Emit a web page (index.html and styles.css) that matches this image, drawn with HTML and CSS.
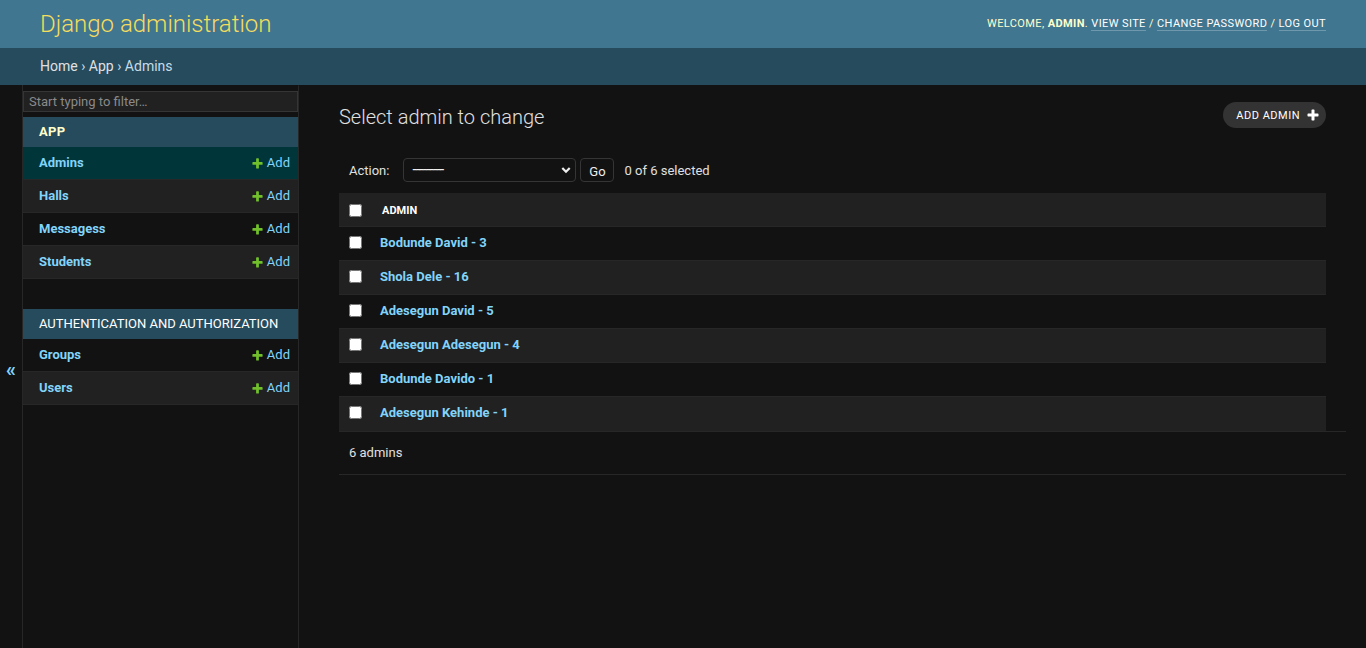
FILE: index.html
```html
<!DOCTYPE html>
<html lang="en">
<head>
<meta charset="utf-8">
<title>Select admin to change | Django site admin</title>
<link rel="stylesheet" href="styles.css">
</head>
<body>
<header class="header">
  <h1 class="site-name"><a href="#">Django administration</a></h1>
  <div class="user-tools">
    Welcome, <strong>admin</strong>. <a href="#">View site</a> / <a href="#">Change password</a> / <a href="#">Log out</a>
  </div>
</header>
<nav class="breadcrumbs"><a href="#">Home</a>&nbsp;›&nbsp;<a href="#">App</a>&nbsp;›&nbsp;Admins</nav>
<div class="main">
  <button class="toggle-nav" type="button">«</button>
  <nav class="nav-sidebar">
    <input class="nav-filter" type="search" placeholder="Start typing to filter…">
    <div class="module current-app">
      <div class="caption"><a class="section" href="#">App</a></div>
      <div class="model-row current-model"><a class="model-name" href="#">Admins</a><a class="addlink" href="#"><svg width="13" height="13" viewBox="0 0 1792 1792"><path fill="#70bf2b" d="M1600 796v192q0 40-28 68t-68 28h-416v416q0 40-28 68t-68 28h-192q-40 0-68-28t-28-68v-416h-416q-40 0-68-28t-28-68v-192q0-40 28-68t68-28h416v-416q0-40 28-68t68-28h192q40 0 68 28t28 68v416h416q40 0 68 28t28 68z"/></svg>Add</a></div>
      <div class="model-row"><a class="model-name" href="#">Halls</a><a class="addlink" href="#"><svg width="13" height="13" viewBox="0 0 1792 1792"><path fill="#70bf2b" d="M1600 796v192q0 40-28 68t-68 28h-416v416q0 40-28 68t-68 28h-192q-40 0-68-28t-28-68v-416h-416q-40 0-68-28t-28-68v-192q0-40 28-68t68-28h416v-416q0-40 28-68t68-28h192q40 0 68 28t28 68v416h416q40 0 68 28t28 68z"/></svg>Add</a></div>
      <div class="model-row"><a class="model-name" href="#">Messagess</a><a class="addlink" href="#"><svg width="13" height="13" viewBox="0 0 1792 1792"><path fill="#70bf2b" d="M1600 796v192q0 40-28 68t-68 28h-416v416q0 40-28 68t-68 28h-192q-40 0-68-28t-28-68v-416h-416q-40 0-68-28t-28-68v-192q0-40 28-68t68-28h416v-416q0-40 28-68t68-28h192q40 0 68 28t28 68v416h416q40 0 68 28t28 68z"/></svg>Add</a></div>
      <div class="model-row"><a class="model-name" href="#">Students</a><a class="addlink" href="#"><svg width="13" height="13" viewBox="0 0 1792 1792"><path fill="#70bf2b" d="M1600 796v192q0 40-28 68t-68 28h-416v416q0 40-28 68t-68 28h-192q-40 0-68-28t-28-68v-416h-416q-40 0-68-28t-28-68v-192q0-40 28-68t68-28h416v-416q0-40 28-68t68-28h192q40 0 68 28t28 68v416h416q40 0 68 28t28 68z"/></svg>Add</a></div>
    </div>
    <div class="module">
      <div class="caption"><a class="section" href="#">Authentication and Authorization</a></div>
      <div class="model-row"><a class="model-name" href="#">Groups</a><a class="addlink" href="#"><svg width="13" height="13" viewBox="0 0 1792 1792"><path fill="#70bf2b" d="M1600 796v192q0 40-28 68t-68 28h-416v416q0 40-28 68t-68 28h-192q-40 0-68-28t-28-68v-416h-416q-40 0-68-28t-28-68v-192q0-40 28-68t68-28h416v-416q0-40 28-68t68-28h192q40 0 68 28t28 68v416h416q40 0 68 28t28 68z"/></svg>Add</a></div>
      <div class="model-row"><a class="model-name" href="#">Users</a><a class="addlink" href="#"><svg width="13" height="13" viewBox="0 0 1792 1792"><path fill="#70bf2b" d="M1600 796v192q0 40-28 68t-68 28h-416v416q0 40-28 68t-68 28h-192q-40 0-68-28t-28-68v-416h-416q-40 0-68-28t-28-68v-192q0-40 28-68t68-28h416v-416q0-40 28-68t68-28h192q40 0 68 28t28 68v416h416q40 0 68 28t28 68z"/></svg>Add</a></div>
    </div>
  </nav>
  <main class="content">
    <div class="content-head">
      <h1 class="title">Select admin to change</h1>
      <a class="object-tool" href="#">Add admin<svg width="14" height="14" viewBox="0 0 1792 1792"><path fill="#fff" d="M1600 796v192q0 40-28 68t-68 28h-416v416q0 40-28 68t-68 28h-192q-40 0-68-28t-28-68v-416h-416q-40 0-68-28t-28-68v-192q0-40 28-68t68-28h416v-416q0-40 28-68t68-28h192q40 0 68 28t28 68v416h416q40 0 68 28t28 68z"/></svg></a>
    </div>
    <div class="actions">
      <span class="action-label">Action:</span>
      <div class="select"><span class="select-value">---------</span><svg width="12" height="12" viewBox="0 0 12 12"><path d="M2.3 4 6 7.7 9.7 4" fill="none" stroke="#eee" stroke-width="2.2"/></svg></div>
      <button class="go-button" type="button">Go</button>
      <span class="action-counter">0 of 6 selected</span>
    </div>
    <table class="result-list">
      <thead>
        <tr><th class="action-checkbox"><input type="checkbox"></th><th class="column-head">Admin</th></tr>
      </thead>
      <tbody>
        <tr><td class="action-checkbox"><input type="checkbox"></td><th class="field"><a href="#">Bodunde David - 3</a></th></tr>
        <tr><td class="action-checkbox"><input type="checkbox"></td><th class="field"><a href="#">Shola Dele - 16</a></th></tr>
        <tr><td class="action-checkbox"><input type="checkbox"></td><th class="field"><a href="#">Adesegun David - 5</a></th></tr>
        <tr><td class="action-checkbox"><input type="checkbox"></td><th class="field"><a href="#">Adesegun Adesegun - 4</a></th></tr>
        <tr><td class="action-checkbox"><input type="checkbox"></td><th class="field"><a href="#">Bodunde Davido - 1</a></th></tr>
        <tr><td class="action-checkbox"><input type="checkbox"></td><th class="field"><a href="#">Adesegun Kehinde - 1</a></th></tr>
      </tbody>
    </table>
    <p class="paginator">6 admins</p>
  </main>
</div>
</body>
</html>
```

FILE: styles.css
```css
* { box-sizing: border-box; }
html, body { height: 100%; }
body {
  margin: 0;
  background: #121212;
  color: #eeeeee;
  font-family: Roboto, "Noto Sans", "Liberation Sans", sans-serif;
  font-size: 14px;
  display: flex;
  flex-direction: column;
  overflow: hidden;
}
a { text-decoration: none; color: #81d4fa; }

.header {
  flex: 0 0 48px;
  display: flex;
  justify-content: space-between;
  align-items: center;
  padding: 0 40px;
  background: #417690;
  color: #ffffcc;
}
.site-name { margin: 0; font-size: 24px; font-weight: 300; line-height: 28px; }
.site-name a { color: #f5dd5d; }
.user-tools {
  font-size: 11px;
  letter-spacing: 0.4px;
  text-transform: uppercase;
  line-height: 14px;
  margin-bottom: 1px;
}
.user-tools strong { font-weight: 700; }
.user-tools a { color: #ffffff; border-bottom: 1px solid rgba(255, 255, 255, 0.25); }

.breadcrumbs {
  flex: 0 0 37px;
  display: flex;
  align-items: center;
  padding: 0 40px 2px;
  background: #264b5d;
  color: #c4dce8;
  font-size: 14px;
}
.breadcrumbs a { color: #e0e0e0; }

.main { flex: 1; display: flex; min-height: 0; }

.toggle-nav {
  flex: 0 0 23px;
  display: flex;
  align-items: center;
  justify-content: center;
  padding: 5px 0 0;
  border: 0;
  border-right: 1px solid #272727;
  background: #121212;
  color: #81d4fa;
  font-family: inherit;
  font-size: 20px;
  font-weight: 700;
}

.nav-sidebar {
  flex: 0 0 276px;
  width: 276px;
  min-width: 0;
  overflow: hidden;
  border-top: 1px solid transparent;
  border-right: 1px solid #272727;
}
.nav-filter {
  display: block;
  width: 100%;
  height: 21px;
  margin: 5px 0;
  padding: 2px 5px;
  border: 1px solid #353535;
  background: #212121;
  color: #eeeeee;
  font-family: inherit;
  font-size: 13px;
  outline: none;
}
.nav-filter::placeholder { color: #8a8a8a; }

.module { margin-bottom: 30px; }
.caption {
  padding: 8px 16px;
  background: #264b5d;
  font-size: 13px;
  line-height: 14px;
  letter-spacing: 0;
  text-transform: uppercase;
  white-space: nowrap;
}
.caption .section { color: #ffffff; }
.current-app .caption .section { color: #ffffcc; font-weight: 700; letter-spacing: 0.3px; }

.model-row {
  display: flex;
  justify-content: space-between;
  align-items: center;
  padding: 8px 8px 8px 16px;
  line-height: 16px;
  font-size: 13px;
  border-bottom: 1px solid #272727;
}
.model-row:nth-child(odd) { background: #212121; }
.model-row.current-model { background: #00363a; }
.model-name { font-weight: 700; }
.addlink { display: flex; align-items: center; gap: 3px; }

.content { flex: 1; padding: 20px 40px; min-width: 0; }
.content-head {
  display: flex;
  justify-content: space-between;
  align-items: flex-start;
  margin-bottom: 20px;
}
.title { margin: 0; font-size: 20px; font-weight: 300; line-height: 24px; color: #e0e0e0; }
.object-tool {
  display: flex;
  align-items: center;
  gap: 6px;
  height: 26px;
  margin-top: -3px;
  padding: 0 6px 0 13px;
  border-radius: 15px;
  background: #333333;
  color: #ffffff;
  font-size: 11px;
  letter-spacing: 0.5px;
  text-transform: uppercase;
}

.actions {
  display: flex;
  align-items: center;
  padding: 9px 10px 11px;
  height: 44px;
  font-size: 13px;
  color: #e0e0e0;
}
.select {
  display: flex;
  align-items: center;
  justify-content: space-between;
  width: 173px;
  height: 24px;
  margin-left: 14px;
  padding: 0 3px 0 8px;
  border: 1px solid #353535;
  border-radius: 4px;
  color: #eeeeee;
  font-size: 14px;
}
.select-value { letter-spacing: -1px; font-size: 16px; line-height: 16px; }
.go-button {
  width: 34px;
  height: 24px;
  margin-left: 4px;
  padding: 2px 0 0;
  border: 1px solid #353535;
  border-radius: 4px;
  background: #121212;
  color: #eeeeee;
  font-family: inherit;
  font-size: 13px;
  line-height: 1;
}
.action-counter { margin-left: 10px; }

.result-list { width: 100%; border-collapse: collapse; font-size: 13px; }
.result-list th, .result-list td {
  padding: 7px 8px 9px;
  line-height: 17px;
  text-align: left;
  vertical-align: middle;
  border-bottom: 1px solid #272727;
}
.result-list thead th { background: #212121; padding-top: 9px; padding-bottom: 7px; }
.result-list .column-head {
  padding-left: 10px;
  font-size: 11px;
  font-weight: 700;
  text-transform: uppercase;
  color: #ffffff;
}
.result-list .action-checkbox { width: 33px; padding-left: 10px; padding-right: 10px; }
.result-list input[type="checkbox"] { display: block; width: 13px; height: 13px; margin: 0; }
.result-list tbody tr:nth-child(even) { background: #212121; }
.result-list tbody tr:last-child th, .result-list tbody tr:last-child td { border-bottom-color: #212121; }
.result-list .field { font-weight: 700; }

.paginator {
  width: calc(100% + 20px);
  margin: 0;
  padding: 10px;
  line-height: 22px;
  font-size: 13px;
  color: #e0e0e0;
  border-top: 1px solid #272727;
  border-bottom: 1px solid #272727;
}
```
